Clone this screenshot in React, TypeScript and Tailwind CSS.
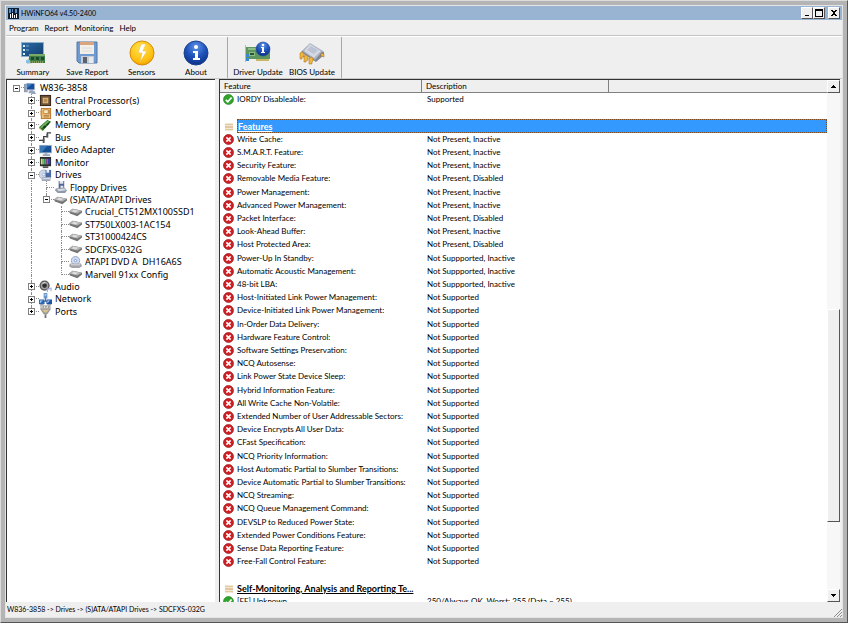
import type { ReactNode } from 'react';

/* ---------------------------------- Data ---------------------------------- */

interface TreeNode {
  label: string;
  /** One letter per indent column: T = branch, L = last branch, I = line, H = stub, _ = empty. */
  guides: string;
  icon: ReactNode;
  toggle?: 'open' | 'closed';
}

type RowKind = 'ok' | 'no' | 'head' | 'blank';

interface Row {
  kind: RowKind;
  name?: string;
  value?: string;
  selected?: boolean;
}

const NOT_PRESENT: [string, string][] = [
  ['Write Cache:', 'Not Present, Inactive'],
  ['S.M.A.R.T. Feature:', 'Not Present, Inactive'],
  ['Security Feature:', 'Not Present, Inactive'],
  ['Removable Media Feature:', 'Not Present, Disabled'],
  ['Power Management:', 'Not Present, Inactive'],
  ['Advanced Power Management:', 'Not Present, Inactive'],
  ['Packet Interface:', 'Not Present, Disabled'],
  ['Look-Ahead Buffer:', 'Not Present, Inactive'],
  ['Host Protected Area:', 'Not Present, Disabled'],
  ['Power-Up In Standby:', 'Not Suppported, Inactive'],
  ['Automatic Acoustic Management:', 'Not Suppported, Inactive'],
  ['48-bit LBA:', 'Not Suppported, Inactive'],
];

const NOT_SUPPORTED = [
  'Host-Initiated Link Power Management:',
  'Device-Initiated Link Power Management:',
  'In-Order Data Delivery:',
  'Hardware Feature Control:',
  'Software Settings Preservation:',
  'NCQ Autosense:',
  'Link Power State Device Sleep:',
  'Hybrid Information Feature:',
  'All Write Cache Non-Volatile:',
  'Extended Number of User Addressable Sectors:',
  'Device Encrypts All User Data:',
  'CFast Specification:',
  'NCQ Priority Information:',
  'Host Automatic Partial to Slumber Transitions:',
  'Device Automatic Partial to Slumber Transitions:',
  'NCQ Streaming:',
  'NCQ Queue Management Command:',
  'DEVSLP to Reduced Power State:',
  'Extended Power Conditions Feature:',
  'Sense Data Reporting Feature:',
  'Free-Fall Control Feature:',
];

const ROWS: Row[] = [
  { kind: 'ok', name: 'IORDY Disableable:', value: 'Supported' },
  { kind: 'blank' },
  { kind: 'head', name: 'Features', selected: true },
  ...NOT_PRESENT.map(([name, value]): Row => ({ kind: 'no', name, value })),
  ...NOT_SUPPORTED.map((name): Row => ({ kind: 'no', name, value: 'Not Supported' })),
  { kind: 'blank' },
  { kind: 'head', name: 'Self-Monitoring, Analysis and Reporting Te...' },
  { kind: 'ok', name: '[FE] Unknown', value: '250/Always OK, Worst: 255 (Data = 255)' },
];

/* ------------------------------- Small icons ------------------------------ */

function Glyph({ children }: { children: ReactNode }) {
  return (
    <svg viewBox="0 0 14 14" className="h-[13px] w-[13px] shrink-0" aria-hidden="true">
      {children}
    </svg>
  );
}

const computerIcon = (
  <Glyph>
    <path d="M0 2h4v9H0z" fill="#8f9bb0" />
    <path d="M2 1h10v8H2z" fill="#c3cbd7" />
    <path d="M3 2h8v6H3z" fill="#174f9c" />
    <path d="M3 2h6L3 7z" fill="#3f7cc4" />
    <path d="M6 9h4v1h2v2H5v-2h1zM8 12h5v1H8z" fill="#95a3b8" />
  </Glyph>
);

const cpuIcon = (
  <Glyph>
    <path d="M1 1h12v12H1z" fill="#33261a" />
    <path d="M2 2h10v10H2z" fill="#6b5234" />
    <path d="M4 4h6v6H4z" fill="#e3bf85" />
    <path d="M5 5h4v4H5z" fill="#b98d52" />
  </Glyph>
);

const boardIcon = (
  <Glyph>
    <path d="M2 1h11v12H2z" fill="#b8752c" />
    <path d="M3 2h9v10H3z" fill="#eec785" />
    <path d="M1 4h3v1H1zM1 6h3v1H1zM1 8h3v1H1z" fill="#d89a42" />
    <path d="M5 3h5v4H5z" fill="#fbe8bb" stroke="#a9692b" strokeWidth=".7" />
    <path d="M5 9h6M5 10.7h6M11 3v5" stroke="#9b602b" strokeWidth=".8" />
  </Glyph>
);

const memoryIcon = (
  <Glyph>
    <path d="M0 9 9 1l4 2-9 10z" fill="#2a6b29" />
    <path d="m1 9 8-7 2 1-8 7z" fill="#6cb159" />
    <path d="m4 9 2-2 2 1-2 2zM8 6l2-2 1 1-2 2z" fill="#18361a" />
    <path d="m0 9 4 3v1l-4-3z" fill="#b9a546" />
  </Glyph>
);

const busIcon = (
  <Glyph>
    <path d="M0 10h5V6h4V2h4" fill="none" stroke="#3c3c3c" strokeWidth="1.3" />
    <path d="M4 8h2v5H4zM8 3h2v4H8z" fill="#555" />
  </Glyph>
);

const videoIcon = (
  <Glyph>
    <path d="M0 1h14v9H0z" fill="#aab9ca" />
    <path d="M1 2h12v7H1z" fill="#174f94" />
    <path d="M1 2h8L3 9H1z" fill="#3977b9" />
    <path d="M6 10h3v1h3v2H4v-2h2z" fill="#9aa8b8" />
  </Glyph>
);

const monitorIcon = (
  <Glyph>
    <path d="M1 1h12v10H1z" fill="#2b2b2b" />
    <path d="M2 3h2v6H2z" fill="#e8df3c" />
    <path d="M4 3h2v6H4z" fill="#30c7cc" />
    <path d="M6 3h2v6H6z" fill="#34b43c" />
    <path d="M8 3h2v6H8z" fill="#cb38bd" />
    <path d="M10 3h2v6h-2z" fill="#2b42c9" />
    <path d="M4 11h6v2H4z" fill="#555" />
  </Glyph>
);

const drivesIcon = (
  <Glyph>
    <circle cx="5" cy="6" r="5" fill="#cfd9ea" stroke="#8c9cb8" strokeWidth=".7" />
    <circle cx="5" cy="6" r="1.4" fill="#fff" stroke="#7b8fb4" strokeWidth=".6" />
    <path d="M7 1h6v8H7z" fill="#4767a6" />
    <path d="M8 1h3v3H8z" fill="#e5ebf5" />
    <path d="M3 9h10l-1 4H3z" fill="#9fa9b9" />
    <path d="M4 10h8v1H4z" fill="#e9edf2" />
  </Glyph>
);

const floppyIcon = (
  <Glyph>
    <path d="M5 0h6v8H5z" fill="#4f6597" />
    <path d="M6 0h4v3H6zM7 5h3v3H7z" fill="#e4e9f2" />
    <path d="m2 8 9-1 3 3-2 3H4l-3-3z" fill="#8f98a8" />
    <path d="m3 9 8-1 2 2-8 1z" fill="#d6dbe3" />
  </Glyph>
);

const diskIcon = (
  <Glyph>
    <path d="m0 6 4-3 10 2v2l-5 4-8-3z" fill="#757575" />
    <path d="m0 6 4-3 10 2-5 3z" fill="#b4b4b4" />
    <path d="m3 6 2-2 5 1-3 2z" fill="#dedede" />
  </Glyph>
);

const opticalIcon = (
  <Glyph>
    <circle cx="7" cy="5" r="4.5" fill="#cfdcf4" stroke="#8295bd" strokeWidth=".8" />
    <circle cx="7" cy="5" r="1.3" fill="#fff" stroke="#5d77b4" strokeWidth=".7" />
    <path d="m1 8 12 0 1 3-3 2H3l-3-2z" fill="#a3a3a8" />
    <path d="M2 9h10v1H2z" fill="#e5e5e8" />
  </Glyph>
);

const audioIcon = (
  <Glyph>
    <circle cx="6" cy="6" r="5.5" fill="#5a5a5a" />
    <circle cx="6" cy="6" r="4" fill="#a3a3a3" />
    <circle cx="6" cy="6" r="2.5" fill="#2f2f2f" />
    <path d="M4 4a3 3 0 0 1 3-1" fill="none" stroke="#eee" />
    <path d="M9 13v-3l4-1v3" fill="none" stroke="#a7b2e8" strokeWidth="1.3" />
  </Glyph>
);

const networkIcon = (
  <Glyph>
    <path d="M7 5v4M3 9h8" stroke="#5c5c5c" />
    <path d="M5 0h4v6H5z" fill="#6a95c8" />
    <path d="M0 7h6v5H0z" fill="#2b67b5" />
    <path d="M8 7h6v5H8z" fill="#1d54a3" />
    <path d="M1 8h3l-3 3zM9 8h3l-3 3zM6 1h2v2H6z" fill="#a6cdf3" />
    <path d="M1 12h4v1H1zM9 12h4v1H9z" fill="#7c8aa0" />
  </Glyph>
);

const portsIcon = (
  <Glyph>
    <path d="M2 0h10v4H2z" fill="#dcd9d2" stroke="#8a8a8a" strokeWidth=".7" />
    <path d="M1 4h12L9 10H5z" fill="#9b9b9b" />
    <path d="M3 5h8L8 8H6z" fill="#d6c48a" />
    <path d="M6 10h2v4H6z" fill="#777" />
    <path d="M4 1h1v2H4zM7 1h1v2H7zM10 1h1v2h-1z" fill="#777" />
  </Glyph>
);

const TREE: TreeNode[] = [
  { label: 'W836-3858', guides: 'H', icon: computerIcon, toggle: 'open' },
  { label: 'Central Processor(s)', guides: '_T', icon: cpuIcon, toggle: 'closed' },
  { label: 'Motherboard', guides: '_T', icon: boardIcon, toggle: 'closed' },
  { label: 'Memory', guides: '_T', icon: memoryIcon, toggle: 'closed' },
  { label: 'Bus', guides: '_T', icon: busIcon, toggle: 'closed' },
  { label: 'Video Adapter', guides: '_T', icon: videoIcon, toggle: 'closed' },
  { label: 'Monitor', guides: '_T', icon: monitorIcon, toggle: 'closed' },
  { label: 'Drives', guides: '_T', icon: drivesIcon, toggle: 'open' },
  { label: 'Floppy Drives', guides: '_IT', icon: floppyIcon },
  { label: '(S)ATA/ATAPI Drives', guides: '_IL', icon: diskIcon, toggle: 'open' },
  { label: 'Crucial_CT512MX100SSD1', guides: '_I_T', icon: diskIcon },
  { label: 'ST750LX003-1AC154', guides: '_I_T', icon: diskIcon },
  { label: 'ST31000424CS', guides: '_I_T', icon: diskIcon },
  { label: 'SDCFXS-032G', guides: '_I_T', icon: diskIcon },
  { label: 'ATAPI DVD A  DH16A6S', guides: '_I_T', icon: opticalIcon },
  { label: 'Marvell 91xx Config', guides: '_I_L', icon: diskIcon },
  { label: 'Audio', guides: '_T', icon: audioIcon, toggle: 'closed' },
  { label: 'Network', guides: '_T', icon: networkIcon, toggle: 'closed' },
  { label: 'Ports', guides: '_L', icon: portsIcon, toggle: 'closed' },
];

/* ------------------------------ Toolbar icons ----------------------------- */

function BigIcon({ children }: { children: ReactNode }) {
  return (
    <svg viewBox="0 0 26 26" className="h-[26px] w-[26px]" aria-hidden="true">
      {children}
    </svg>
  );
}

const summaryIcon = (
  <BigIcon>
    <defs>
      <linearGradient id="screen" x1="0" y1="0" x2="1" y2="1">
        <stop offset="0" stopColor="#2c6ba5" />
        <stop offset="1" stopColor="#123f70" />
      </linearGradient>
    </defs>
    <path d="M1 2h23v15H1z" fill="#8fb0cc" />
    <path d="M2 3h21v13H2z" fill="url(#screen)" />
    <path d="M3 5h2v2H3zM3 9h2v2H3zM3 13h2v2H3z" fill="#d9ecf8" />
    <path d="M6 6h3M6 10h3" stroke="#7cb1da" />
    <path d="m7 20 3-3h3v6l-6 1z" fill="#b9c7d3" />
    <path d="M9 14h16v9H9z" fill="#3f7d48" />
    <path d="M9 14h16v2H9z" fill="#7aaa66" />
    <path d="M11 17h3v3h-3zM16 17h3v3h-3zM21 17h3v3h-3z" fill="#1d4a2a" />
    <path d="M10 22h14" stroke="#c6c069" strokeDasharray="1 1" />
    <path d="M6 20h4v3H6z" fill="#7fc3e8" />
  </BigIcon>
);

const saveIcon = (
  <BigIcon>
    <path d="M3 2h20v21H5l-2-2z" fill="#6f9bd0" stroke="#5578a8" />
    <path d="M6 2h14v12H6z" fill="#f1efea" />
    <path d="M6 2h14v3H6z" fill="#dba47c" />
    <path d="M8 8h10M8 11h10" stroke="#dcdcdc" />
    <path d="M7 16h13v7H7z" fill="#c9cdd3" />
    <path d="M9 17h4v6H9z" fill="#5a626e" />
    <path d="M15 17h4v6h-4z" fill="#e8eaed" />
  </BigIcon>
);

const sensorsIcon = (
  <BigIcon>
    <defs>
      <radialGradient id="amber" cx=".45" cy=".3" r=".8">
        <stop offset="0" stopColor="#ffe44d" />
        <stop offset=".7" stopColor="#fdbd0d" />
        <stop offset="1" stopColor="#e08a00" />
      </radialGradient>
    </defs>
    <circle cx="13" cy="13" r="12" fill="url(#amber)" stroke="#d58a0a" />
    <path d="m12 4-3 9h4l-2 9 7-11h-4l3-7z" fill="#fff" stroke="#f2b83c" strokeWidth=".6" />
  </BigIcon>
);

const infoGradient = (
  <defs>
    <radialGradient id="info" cx=".5" cy=".25" r=".8">
      <stop offset="0" stopColor="#5f94e8" />
      <stop offset=".5" stopColor="#1f53bb" />
      <stop offset="1" stopColor="#0a2c80" />
    </radialGradient>
  </defs>
);

const aboutIcon = (
  <BigIcon>
    {infoGradient}
    <circle cx="13" cy="13" r="12" fill="url(#info)" stroke="#1c428f" />
    <circle cx="13" cy="7" r="2" fill="#fff" />
    <path d="M10 11h5v7h2v2h-7v-2h2v-5h-2z" fill="#fff" />
  </BigIcon>
);

const driverIcon = (
  <BigIcon>
    <path d="M0 5h1v17H0z" fill="#b5b8bb" />
    <path d="M1 7h24v12H1z" fill="#5c955f" />
    <path d="M3 8h8v2H3zM4 12h6v4H4z" fill="#8bbd84" />
    <path d="M5 13h4v2H5z" fill="#24552f" />
    <path d="M11 19h13v2H11z" fill="#c8b765" />
    <path d="M1 14h3v3H1zM1 18h3v3H1z" fill="#3a87d1" />
    <circle cx="18" cy="9" r="7" fill="url(#info)" stroke="#23499b" strokeWidth=".6" />
    <circle cx="18" cy="5" r="1.3" fill="#fff" />
    <path d="M16 7h3v5h1v1h-4v-1h1V8h-1z" fill="#fff" />
  </BigIcon>
);

const biosIcon = (
  <BigIcon>
    <path d="m2 12 9-8 14 8v3l-8 7z" fill="#7f8796" />
    <path d="m3 11 8-8 13 8-8 9z" fill="#aab1c1" />
    <path d="m5 11 6-7 11 7-7 7z" fill="#d4d8e3" />
    <path d="m8 10 4-4 7 4-4 4z" fill="#bcc3d4" />
    <path
      d="m1 13 2-1 2 1v4H3v2H1zM5 16l2-1 2 1v4l-2 1v1H5zM10 18l2-1 2 1v3l-1 1v2h-3zM22 13l3 1v3l-3-1z"
      fill="#edb83b"
      stroke="#a9661a"
      strokeWidth=".5"
    />
  </BigIcon>
);

/* --------------------------------- Pieces --------------------------------- */

function StatusIcon({ kind }: { kind: RowKind }) {
  if (kind === 'blank') return null;
  if (kind === 'head') {
    return (
      <svg viewBox="0 0 11 11" className="h-[11px] w-[11px] shrink-0" aria-hidden="true">
        <path d="M2 2h8v8H2z" fill="#f3e7d5" />
        <path d="M2 3h8v1H2zM2 5h8v2H2zM2 8h8v1H2z" fill="#e2c79f" />
      </svg>
    );
  }
  return (
    <svg viewBox="0 0 11 11" className="h-[11px] w-[11px] shrink-0" aria-hidden="true">
      {kind === 'ok' ? (
        <>
          <circle cx="5.5" cy="5.5" r="5" fill="#2fa32c" stroke="#1e7f1e" strokeWidth=".6" />
          <path d="m2.8 5.8 2 2 3.8-4.3" fill="none" stroke="#fff" strokeWidth="1.7" />
        </>
      ) : (
        <>
          <circle cx="5.5" cy="5.5" r="5" fill="#cf1f24" stroke="#98161a" strokeWidth=".7" />
          <path d="m3.4 3.4 4.2 4.2m0-4.2-4.2 4.2" stroke="#fff" strokeWidth="1.6" />
        </>
      )}
    </svg>
  );
}

/** Quarter cells: the line runs down the middle, the stub leaves it to the right. */
function Guide({ type, children }: { type: string; children?: ReactNode }) {
  const upper = type === 'T' || type === 'L' || type === 'I';
  const lower = type === 'T' || type === 'I';
  const stub = type === 'T' || type === 'L' || type === 'H';
  return (
    <span className="relative grid w-[15px] shrink-0 grid-cols-[7px_8px] grid-rows-2 self-stretch">
      <span />
      <span
        className={`border-dotted border-[#8c8c8c] ${upper ? 'border-l' : ''} ${stub ? 'border-b' : ''}`}
      />
      <span />
      <span className={`border-dotted border-[#8c8c8c] ${lower ? 'border-l' : ''}`} />
      {children}
    </span>
  );
}

function TreeRow({ node }: { node: TreeNode }) {
  const last = node.guides.length - 1;
  return (
    <li className="flex min-h-0 items-center">
      {node.guides.split('').map((type, i) => (
        <Guide key={i} type={type}>
          {i === last && node.toggle && (
            <button
              aria-label={`${node.toggle === 'open' ? 'Collapse' : 'Expand'} ${node.label}`}
              className="absolute inset-y-0 left-[4px] my-auto h-[7px] w-[7px] border border-[#808080] bg-white"
            >
              <svg viewBox="0 0 5 5" className="block h-[5px] w-[5px]" shapeRendering="crispEdges">
                <path d={node.toggle === 'open' ? 'M1 2h3v1H1z' : 'M1 2h3v1H1zM2 1h1v3H2z'} />
              </svg>
            </button>
          )}
        </Guide>
      ))}
      {node.icon}
      <span className="ml-[3px] whitespace-pre leading-[12px]">{node.label}</span>
    </li>
  );
}

function ToolButton({ icon, label }: { icon: ReactNode; label: string }) {
  return (
    <button className="flex w-[54px] flex-col items-center justify-between whitespace-nowrap pt-[3px]">
      {icon}
      <span className="leading-[12px]">{label}</span>
    </button>
  );
}

function CaptionButton({ label, d }: { label: string; d: string }) {
  return (
    <button
      aria-label={label}
      className="h-[12px] w-[12px] border border-t-white border-r-[#555] border-b-[#555] border-l-white bg-[#efefef]"
    >
      <svg viewBox="0 0 10 10" className="block h-[10px] w-[10px]" shapeRendering="crispEdges">
        <path d={d} />
      </svg>
    </button>
  );
}

function ScrollArrow({ label, d }: { label: string; d: string }) {
  return (
    <button
      aria-label={label}
      className="h-[13px] w-[13px] shrink-0 border border-t-white border-r-[#555] border-b-[#555] border-l-white bg-[#efefef]"
    >
      <svg viewBox="0 0 11 11" className="block h-[11px] w-[11px]" shapeRendering="crispEdges">
        <path d={d} />
      </svg>
    </button>
  );
}

/* ----------------------------------- App ---------------------------------- */

export default function App() {
  return (
    <div className="h-screen border border-t-[#dcdcdc] border-r-[#555] border-b-[#555] border-l-[#dcdcdc] bg-[#b4b4b4] p-[4px] font-['Lato','Noto_Sans',sans-serif] text-[8px] text-black">
      <div className="flex h-full flex-col overflow-hidden border border-[#e4e4e4] bg-[#efefef]">
        <header className="flex h-[14px] shrink-0 items-center gap-[2px] bg-[#99b3d2] px-[2px]">
          <svg viewBox="0 0 11 11" className="h-[11px] w-[11px]" aria-hidden="true">
            <path d="M0 0h11v11H0z" fill="#0d1f33" />
            <path d="M1 1h2v4H1zM4 1h1v3H4zM7 1h2v4H7z" fill="#5b8fc4" />
            <path d="M2 6h1v4H2zM4 5h1v5H4zM6 7h1v3H6zM8 6h1v4H8z" fill="#fff" />
          </svg>
          <h1 className="flex-1 text-[7px]">HWiNFO64 v4.50-2400</h1>
          <div className="flex">
            <CaptionButton label="Minimize" d="M3 7h4v1H3z" />
            <CaptionButton label="Maximize" d="M1 1h8v8H1zM2 3v5h6V3z" />
            <span className="w-[3px]" />
            <CaptionButton label="Close" d="M2 2h2v1h2V2h2v1H7v1H6v2h1v1h1v1H6V7H4v1H2V7h1V6h1V4H3V3H2z" />
          </div>
        </header>

        <nav className="flex h-[16px] shrink-0 items-center gap-[6px] border-b border-[#c4c4c4] px-[3px]">
          <button>Program</button>
          <button>Report</button>
          <button>Monitoring</button>
          <button>Help</button>
        </nav>

        <div className="flex h-[43px] shrink-0 border-t border-b border-t-white border-b-[#c8c8c8]">
          <div className="flex w-[222px] justify-between border-r border-[#a8a8a8] pr-[4px]">
            <ToolButton icon={summaryIcon} label="Summary" />
            <ToolButton icon={saveIcon} label="Save Report" />
            <ToolButton icon={sensorsIcon} label="Sensors" />
            <ToolButton icon={aboutIcon} label="About" />
          </div>
          <div className="flex border-r border-[#a8a8a8] pr-[2px] pl-[3px]">
            <ToolButton icon={driverIcon} label="Driver Update" />
            <ToolButton icon={biosIcon} label="BIOS Update" />
          </div>
        </div>

        <main className="flex min-h-0 flex-1 gap-[4px] pr-[2px]">
          <div className="w-[209px] shrink-0 border-t border-l border-[#333] bg-white">
            <ul className="grid h-[238px] auto-rows-fr pt-[2px] pl-[2px] font-['Noto_Sans',sans-serif] text-[9px]">
              {TREE.map((node) => (
                <TreeRow key={node.label} node={node} />
              ))}
            </ul>
          </div>

          <div className="flex min-w-0 flex-1 border-t border-l border-[#333] bg-white">
            <div className="min-w-0 flex-1 overflow-hidden">
              <table className="flex h-[calc(100%+6px)] flex-col text-left">
                <thead className="block shrink-0">
                  <tr className="flex h-[13px] border-b border-[#808080] bg-[#efefef] leading-[13px]">
                    <th className="w-[202px] border-r border-[#808080] py-0 pr-0 pl-[4px] font-normal">
                      Feature
                    </th>
                    <th className="w-[187px] border-r border-[#808080] py-0 pr-0 pl-[4px] font-normal">
                      Description
                    </th>
                  </tr>
                </thead>
                <tbody className="grid flex-1 auto-rows-fr">
                  {ROWS.map((row, i) => (
                    <tr key={i} className="flex min-h-0 items-stretch leading-[11px]">
                      <td className="flex w-[17px] items-center py-0 pr-0 pl-[3px]">
                        <StatusIcon kind={row.kind} />
                      </td>
                      {row.kind === 'head' ? (
                        <td
                          className={`flex flex-1 items-center p-0 text-[9px] font-bold underline ${
                            row.selected
                              ? 'border border-dotted border-[#7a4a20] bg-[#3399ff] text-white'
                              : ''
                          }`}
                        >
                          {row.name}
                        </td>
                      ) : (
                        <>
                          <td className="flex w-[190px] items-center p-0">{row.name}</td>
                          <td className="flex items-center p-0 whitespace-nowrap">{row.value}</td>
                        </>
                      )}
                    </tr>
                  ))}
                </tbody>
              </table>
            </div>

            <div className="flex w-[13px] shrink-0 flex-col bg-[#f7f7f7]">
              <ScrollArrow label="Scroll up" d="M5 4h1v1h1v1h1v1H3V6h1V5h1z" />
              <div className="flex-[216]" />
              <div className="flex-[211] border border-t-white border-r-[#555] border-b-[#555] border-l-white bg-[#efefef]" />
              <div className="flex-[67]" />
              <ScrollArrow label="Scroll down" d="M3 4h5v1H7v1H6v1H5V6H4V5H3z" />
            </div>
          </div>
        </main>

        <footer className="flex h-[15px] shrink-0 items-center justify-between pl-[1px] text-[7px]">
          <p>W836-3858 -&gt; Drives -&gt; (S)ATA/ATAPI Drives -&gt; SDCFXS-032G</p>
          <svg viewBox="0 0 8 8" className="h-[8px] w-[8px] self-end" aria-hidden="true">
            <path d="m0 8 8-8M3 8l5-5M6 8l2-2" stroke="#8c8c8c" />
          </svg>
        </footer>
      </div>
    </div>
  );
}
